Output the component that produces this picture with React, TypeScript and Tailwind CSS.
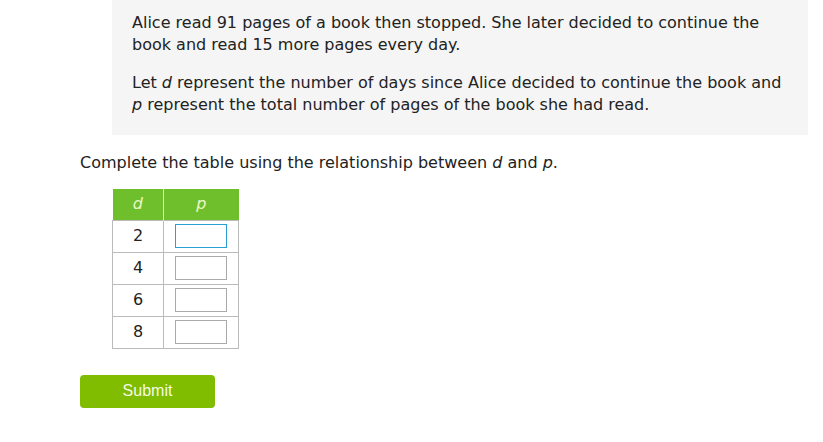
import React from "react";

const rows = ["2", "4", "6", "8"];

export default function App() {
  return (
    <div
      className="h-[442px] w-[823px] bg-white text-[16px] text-[#222]"
      style={{ fontFamily: '"DejaVu Sans", Verdana, sans-serif' }}
    >
      <div className="ml-[112px] w-[696px] bg-[#f5f5f5] px-5 pt-[12px] pb-[19px] leading-[22px]">
        <p>
          Alice read 91 pages of a book then stopped. She later decided to continue the
          book and read 15 more pages every day.
        </p>
        <p className="mt-4">
          Let <i>d</i> represent the number of days since Alice decided to continue the book and{" "}
          <i>p</i> represent the total number of pages of the book she had read.
        </p>
      </div>

      <p className="ml-[80px] mt-[17px] leading-[22px]">
        Complete the table using the relationship between <i>d</i> and <i>p</i>.
      </p>

      <table className="ml-[112px] mt-[15px] border-collapse text-center">
        <thead>
          <tr className="h-[31px] bg-[#6ebf2b] text-[#e8f7c8]">
            <th className="w-[51px] border-r border-[#d9efc6] font-normal italic">d</th>
            <th className="w-[75px] font-normal italic">p</th>
          </tr>
        </thead>
        <tbody>
          {rows.map((r, i) => (
            <tr key={r} className="h-[32px]">
              <td className="border border-[#bbbbbb]">{r}</td>
              <td className="border border-[#bbbbbb]">
                <div className="flex justify-center">
                  <input
                    className={
                      i === 0
                        ? "h-[24px] w-[52px] border border-[#2a9fd6] bg-white outline-none"
                        : "h-[24px] w-[52px] border border-[#aaaaaa] bg-white outline-none"
                    }
                  />
                </div>
              </td>
            </tr>
          ))}
        </tbody>
      </table>

      <button
        className="ml-[80px] mt-[26px] h-[33px] w-[135px] rounded-[4px] bg-[#80bc00] text-[16px] text-[#f4fbe4]"
        style={{ fontFamily: '"Liberation Sans", Arial, sans-serif' }}
      >
        Submit
      </button>
    </div>
  );
}
